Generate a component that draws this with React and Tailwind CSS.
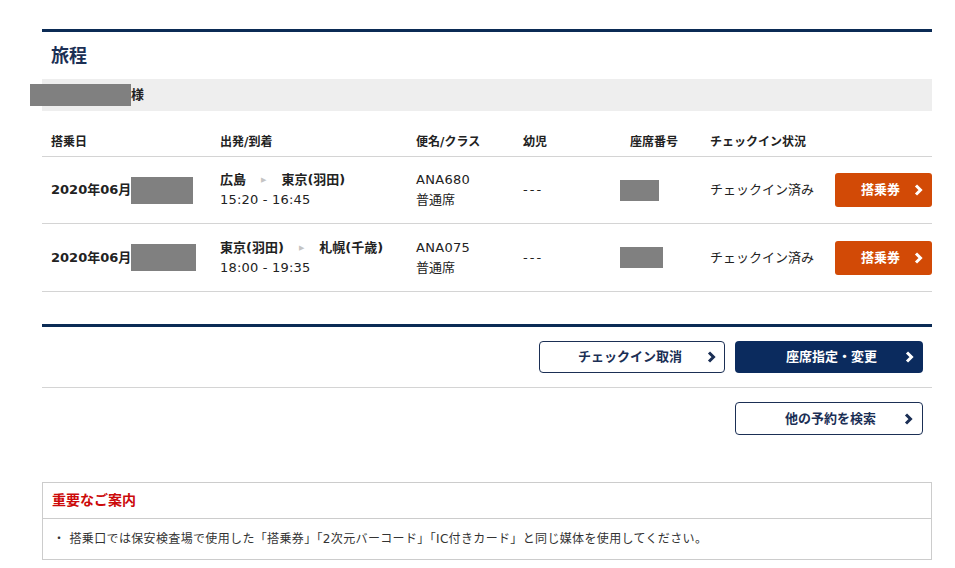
import React from "react";

const font = { fontFamily: '"DejaVu Sans", "Noto Sans CJK JP", sans-serif' };

function Chevron({ className = "" }) {
  return (
    <svg className={className} width="9" height="12" viewBox="0 0 9 12" fill="none">
      <polyline points="2,1.5 6.5,6 2,10.5" stroke="currentColor" strokeWidth="3" strokeLinejoin="miter" />
    </svg>
  );
}

const flights = [
  { from: "広島", to: "東京(羽田)", time: "15:20 - 16:45", no: "ANA680", boxW: "w-[62px]", seatW: "w-[39px]", h: "h-[67px]" },
  { from: "東京(羽田)", to: "札幌(千歳)", time: "18:00 - 19:35", no: "ANA075", boxW: "w-[65px]", seatW: "w-[43px]", h: "h-[68px]" },
];

const cols = "grid grid-cols-[169px_196px_107px_97px_90px_125px_106px]";

function App() {
  return (
    <div className="min-h-[568px] bg-white pt-[29px] text-[13px] text-[#222]" style={font}>
      <div className="ml-[42px] w-[890px]">
        {/* Heading */}
        <div className="h-[3px] bg-[#0b2b55]" />
        <div className="flex h-[47px] items-center pl-[9px]">
          <h1 className="text-[18px] font-bold text-[#1b2f55]">旅程</h1>
        </div>
        <div className="flex h-[32px] items-center bg-[#eeeeee]">
          <span className="-ml-[12px] h-[22px] w-[101px] bg-[#808080]" />
          <span className="font-bold">様</span>
        </div>

        {/* Table */}
        <div className={`${cols} h-[46px] items-end border-b border-[#d4d4d4] pb-[5px] text-[12px] font-bold`}>
          <div className="pl-[9px]">搭乗日</div>
          <div className="pl-[9px]">出発/到着</div>
          <div className="pl-[9px]">便名/クラス</div>
          <div className="pl-[9px]">幼児</div>
          <div className="pl-[19px]">座席番号</div>
          <div className="pl-[9px]">チェックイン状況</div>
          <div />
        </div>
        {flights.map((f) => (
          <div key={f.no} className={`${cols} ${f.h} items-center border-b border-[#d4d4d4]`}>
            <div className="flex items-center pl-[9px]">
              <span className="font-bold">2020年06月</span>
              <span className={`h-[27px] ${f.boxW} bg-[#808080]`} />
            </div>
            <div className="pl-[9px] leading-[20px]">
              <div className="flex items-center font-bold">
                <span>{f.from}</span>
                <span className="mx-[15px] text-[7px] text-[#c4c4c4]">▶</span>
                <span>{f.to}</span>
              </div>
              <div className="tracking-[0.2px]">{f.time}</div>
            </div>
            <div className="pl-[9px] leading-[20px]">
              <div className="tracking-[0.3px]">{f.no}</div>
              <div>普通席</div>
            </div>
            <div className="pl-[9px] tracking-[2px]">---</div>
            <div className="pl-[9px]">
              <div className={`h-[21px] ${f.seatW} bg-[#808080]`} />
            </div>
            <div className="pl-[9px] text-[13px]">チェックイン済み</div>
            <div className="flex justify-end">
              <button className="flex h-[34px] w-[97px] items-center justify-end gap-[14px] rounded-[3px] bg-[#d24a06] pr-[9px] font-bold text-white">
                搭乗券
                <Chevron />
              </button>
            </div>
          </div>
        ))}

        {/* Actions */}
        <div className="mt-[32px] h-[3px] bg-[#0b2b55]" />
        <div className="flex justify-end gap-[10px] border-b border-[#d4d4d4] pt-[14px] pb-[14px] pr-[9px]">
          <button className="flex h-[32px] w-[186px] items-center justify-end gap-[25px] rounded-[4px] border border-[#1b2f55] bg-white pr-[8px] font-bold text-[#1b2f55]">
            チェックイン取消
            <Chevron />
          </button>
          <button className="flex h-[32px] w-[188px] items-center justify-end gap-[28px] rounded-[4px] bg-[#0b2b5e] pr-[9px] font-bold text-white">
            座席指定・変更
            <Chevron />
          </button>
        </div>
        <div className="flex justify-end pt-[14px] pr-[9px]">
          <button className="flex h-[33px] w-[188px] items-center justify-end gap-[28px] rounded-[4px] border border-[#1b2f55] bg-white pr-[9px] font-bold text-[#1b2f55]">
            他の予約を検索
            <Chevron />
          </button>
        </div>

        {/* Notice */}
        <div className="mt-[47px] border border-[#cccccc]">
          <div className="flex h-[36px] items-center border-b border-[#cccccc] pl-[9px] text-[14px] font-bold text-[#cc0a0a]">
            重要なご案内
          </div>
          <div className="flex h-[40px] items-center pl-[10px] text-[12px] tracking-[0.35px] text-[#333]">
            ・ 搭乗口では保安検査場で使用した「搭乗券」「2次元バーコード」「IC付きカード」と同じ媒体を使用してください。
          </div>
        </div>
      </div>
    </div>
  );
}

export default App;
